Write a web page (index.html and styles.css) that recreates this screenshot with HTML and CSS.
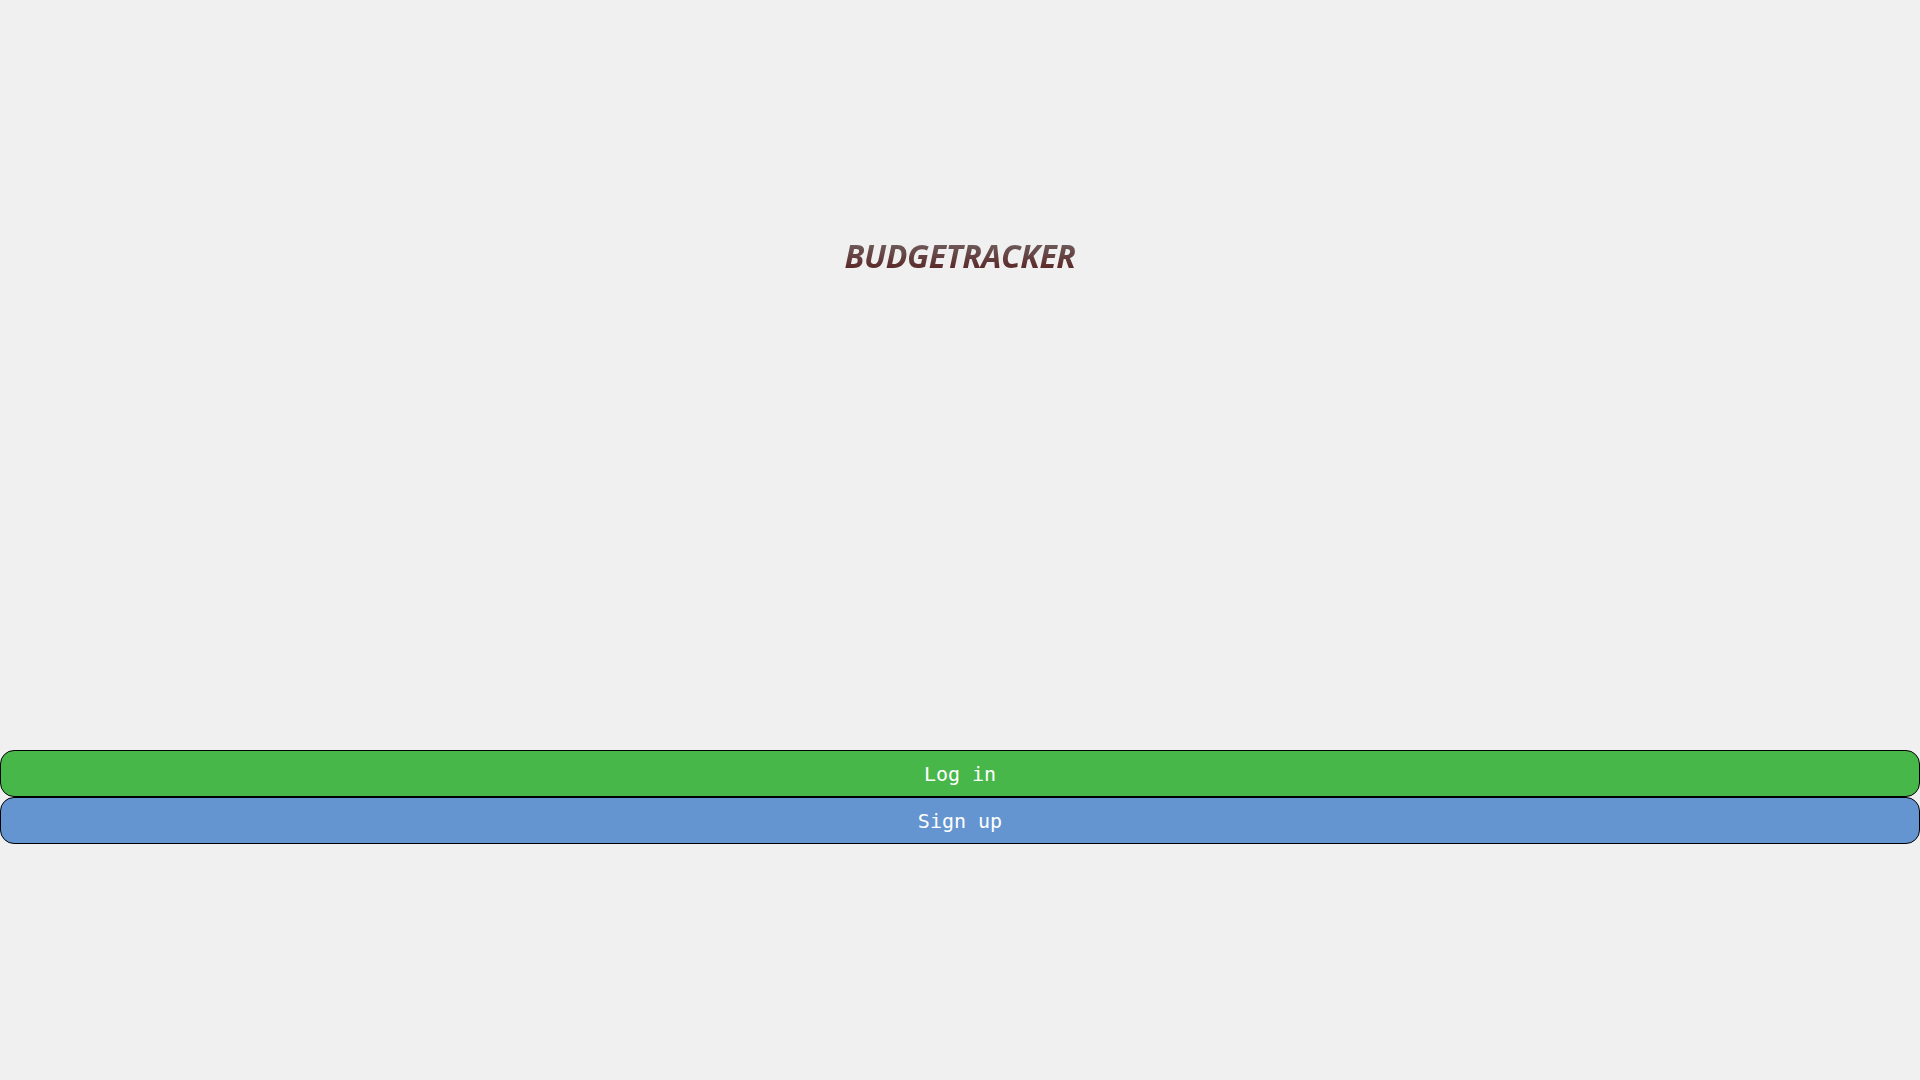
FILE: index.html
```html
<!DOCTYPE html>
<html>
<head>
<meta charset="utf-8">
<link rel="stylesheet" href="styles.css">
</head>
<body>
<main class="page">
  <header class="brand">
    <h1 class="brand-title">BUDGETRACKER</h1>
  </header>
  <div class="actions">
    <button class="btn btn-login">Log in</button>
    <button class="btn btn-signup">Sign up</button>
  </div>
</main>
</body>
</html>
```
FILE: styles.css
```css
html, body {
  margin: 0;
  padding: 0;
  background: #f0f0f0;
}
.page {
  display: flex;
  flex-direction: column;
  min-height: 1080px;
}
.brand {
  padding-top: 236px;
  height: 750px;
  flex-shrink: 0;
  box-sizing: border-box;
  text-align: center;
}
.brand-title {
  margin: 0;
  display: inline-block;
  font-family: "Open Sans", sans-serif;
  font-weight: 700;
  font-style: italic;
  font-size: 32px;
  line-height: 40px;
  letter-spacing: -0.4px;
  background: linear-gradient(to bottom, #6e5a5a 20%, #5a2626 85%);
  -webkit-background-clip: text;
  background-clip: text;
  color: transparent;
}
.actions {
  display: flex;
  flex-direction: column;
}
.btn {
  display: block;
  width: 100%;
  height: 47px;
  margin: 0;
  border: 1px solid #000;
  border-radius: 14px;
  font-family: "DejaVu Sans Mono", monospace;
  font-size: 20px;
  color: #ffffff;
  cursor: pointer;
}
.btn-login {
  background: #48b74a;
}
.btn-signup {
  background: #6495d0;
}
```
